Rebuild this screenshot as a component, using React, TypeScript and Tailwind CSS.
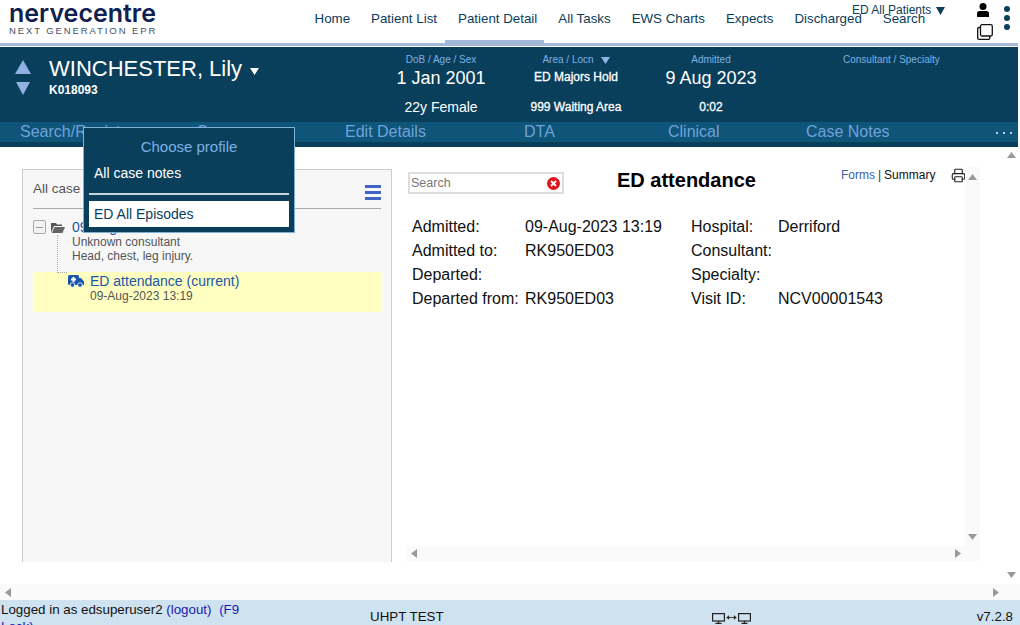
import React from 'react';
import { Printer } from 'lucide-react';

const navItems = ['Home', 'Patient List', 'Patient Detail', 'All Tasks', 'EWS Charts', 'Expects', 'Discharged', 'Search'];

const Tri = ({ dir, className }: { dir: 'up' | 'down' | 'left' | 'right'; className?: string }) => {
  const points = {
    up: '0,10 5,0 10,10',
    down: '0,0 10,0 5,10',
    left: '10,0 10,10 0,5',
    right: '0,0 10,5 0,10',
  }[dir];
  return (
    <svg viewBox="0 0 10 10" preserveAspectRatio="none" className={className}>
      <polygon points={points} fill="currentColor" />
    </svg>
  );
};

const Monitor = () => (
  <svg width="13" height="11" viewBox="0 0 13 11" fill="none" stroke="#222" strokeWidth="1.2">
    <rect x="0.6" y="0.6" width="11.8" height="7.4" />
    <path d="M6.500 8v2M3.500 10.400h6" />
  </svg>
);

const Ambulance = () => (
  <svg width="16" height="13" viewBox="0 0 16 13">
    <path d="M1.5 0h8A1.5 1.5 0 0 1 11 1.5V3h2l3 3.500V10H1.500A1.500 1.500 0 0 1 0 8.500v-7A1.500 1.500 0 0 1 1.500 0z" fill="#1a56a8" />
    <path d="M4.500 2h2v1.500H8v2H6.500V7h-2V5.500H3v-2h1.500z" fill="#fff" />
    <circle cx="4.500" cy="10" r="2.300" fill="#1a56a8" stroke="#fff" strokeWidth="0.8" />
    <circle cx="12" cy="10" r="2.300" fill="#1a56a8" stroke="#fff" strokeWidth="0.8" />
  </svg>
);

const Folder = () => (
  <svg width="14" height="11" viewBox="0 0 14 11">
    <path d="M0 1h5l1 1.500h5V4H3L0 10.500z" fill="#555" />
    <path d="M3.500 5H14l-2.500 6H0.800z" fill="#666" />
  </svg>
);

const UserIcon = () => (
  <svg width="12" height="14" viewBox="0 0 12 14" fill="#000">
    <circle cx="6" cy="3.500" r="3.500" />
    <path d="M2.500 8h7A2.500 2.500 0 0 1 12 10.500V14H0v-3.500A2.500 2.500 0 0 1 2.500 8z" />
  </svg>
);

const CopyIcon = () => (
  <svg width="16" height="16" viewBox="0 0 16 16" fill="none" stroke="#111" strokeWidth="1.300">
    <rect x="3.500" y="0.700" width="11.800" height="11.300" rx="1.500" />
    <path d="M3.500 3.500H2A1.300 1.300 0 0 0 0.700 4.800V14a1.300 1.300 0 0 0 1.300 1.300h9.500A1.300 1.300 0 0 0 12.800 14v-2" />
  </svg>
);

const DoubleArrow = () => (
  <svg width="11" height="7" viewBox="0 0 11 7" fill="#222" stroke="#222" strokeWidth="0.8">
    <path d="M1.500 3.500h8" fill="none" />
    <path d="M0.500 3.500L3 1.500v4zM10.500 3.500L8 1.500v4z" strokeWidth="0.300" />
  </svg>
);

const InfoColumn = ({ label, top, bottom, topClass, bottomClass, width, arrow }: {
  label: string;
  top: string;
  bottom: string;
  topClass: string;
  bottomClass: string;
  width: string;
  arrow?: boolean;
}) => (
  <div className={`flex flex-col items-center ${width}`}>
    <div className="flex h-[12px] items-center gap-[7px] text-[10px] leading-[12px] text-[#7db0e6]">
      {label}
      {arrow && <Tri dir="down" className="h-[7px] w-[9px] text-[#8fb4e8]" />}
    </div>
    <div className={`flex h-[25px] items-center text-white ${topClass}`}>{top}</div>
    <div className={`mt-[6px] flex h-[20px] items-center text-white ${bottomClass}`}>{bottom}</div>
  </div>
);

const Row = ({ label, value, width }: { label: string; value?: string; width: string }) => (
  <div className="flex h-[24px] items-center">
    <span className={width}>{label}</span>
    <span>{value}</span>
  </div>
);

const App: React.FC = () => {
  return (
    <div className="relative flex h-[625px] w-[1020px] flex-col overflow-hidden bg-white font-['Liberation_Sans',Arial,sans-serif] text-[#111]">
      {/* Top nav */}
      <div className="h-[47px] w-[1018px] shrink-0 pb-[1px]">
        <header className="relative flex h-[46px] border-b-[3px] border-b-[#a3b9d9] bg-white">
          <div className="flex w-[300px] flex-col pl-[9px]">
            <span className="mt-[-1px] font-['Inter',sans-serif] text-[25px] font-semibold leading-[29px] text-[#10204f]">nervecentre</span>
            <span className="mt-[-3px] text-[9.500px] leading-[12px] tracking-[1.900px] text-[#44506a]">NEXT GENERATION EPR</span>
          </div>
          <nav className="ml-[4px] flex items-start">
            {navItems.map((item) =>
              item === 'Patient Detail' ? (
                <div key={item} className="ml-[-2.500px] mr-[3.500px] flex h-[46px] items-center whitespace-nowrap border-b-[6px] border-b-[#a3b9d9] pb-[2px] pl-[13px] pr-[7px] text-[13.333px] text-[#0b3c5a]">
                  {item}
                </div>
              ) : (
                <div key={item} className="flex h-[43px] items-center whitespace-nowrap px-[10.500px] pb-[5px] text-[13.333px] text-[#0b3c5a]">
                  {item}
                </div>
              ),
            )}
          </nav>
          <div className="absolute left-[852px] top-[3px] flex items-center gap-[5px] text-[12px] leading-[15px] text-[#0b3c5a]">
            ED All Patients
            <Tri dir="down" className="h-[8px] w-[9px] text-[#0b3c5a]" />
          </div>
          <div className="absolute left-[977px] top-[3px]">
            <UserIcon />
          </div>
          <div className="absolute left-[977px] top-[24px]">
            <CopyIcon />
          </div>
          <div className="absolute left-[1004px] top-[6px] flex flex-col gap-[3px]">
            <div className="h-[6px] w-[6px] rounded-full bg-[#0a3f5c]" />
            <div className="h-[6px] w-[6px] rounded-full bg-[#0a3f5c]" />
            <div className="h-[6px] w-[6px] rounded-full bg-[#0a3f5c]" />
          </div>
        </header>
      </div>

      {/* Patient banner */}
      <section className="flex h-[75px] w-[1018px] shrink-0 bg-[#0a3f5c]">
        <div className="flex w-[49px] flex-col items-center pt-[13px]">
          <Tri dir="up" className="mr-[3px] h-[14px] w-[16px] text-[#8fb0e0]" />
          <Tri dir="down" className="mr-[3px] mt-[8px] h-[13px] w-[14px] text-[#8fb0e0]" />
        </div>
        <div className="w-[327px] pt-[6px]">
          <div className="flex h-[30px] items-center text-[22px] text-white">
            WINCHESTER, Lily
            <Tri dir="down" className="ml-[8px] mt-[6px] h-[7px] w-[9px] text-white" />
          </div>
          <div className="text-[12px] font-bold leading-[15px] text-white">K018093</div>
        </div>
        <div className="flex pt-[7px]">
          <InfoColumn width="w-[130px]" label="DoB / Age / Sex" top="1 Jan 2001" bottom="22y Female" topClass="text-[18px]" bottomClass="text-[14px]" />
          <InfoColumn width="w-[140px]" label="Area / Locn" top="ED Majors Hold" bottom="999 Waiting Area" topClass="pb-[3px] text-[12px] [-webkit-text-stroke:0.3px_white]" bottomClass="text-[12px] [-webkit-text-stroke:0.3px_white]" arrow />
          <InfoColumn width="w-[130px]" label="Admitted" top="9 Aug 2023" bottom="0:02" topClass="text-[18px]" bottomClass="text-[12px] [-webkit-text-stroke:0.3px_white]" />
          <div className="whitespace-nowrap pl-[67px] text-[10px] leading-[12px] text-[#7db0e6]">Consultant / Specialty</div>
        </div>
      </section>

      {/* Tabs */}
      <div className="w-[1018px] shrink-0 bg-[#0a3f5c] pb-[5px]">
        <div className="relative flex h-[20px] items-center bg-[#0f5479] text-[16px] text-[#6fa3d8]">
          <div className="flex w-[177px] pl-[20px]">Search/Register</div>
          <div className="flex w-[168px] pl-[20px]">Summary</div>
          <div className="w-[179px]">Edit Details</div>
          <div className="w-[144px]">DTA</div>
          <div className="w-[138px]">Clinical</div>
          <div>Case Notes</div>
          <div className="absolute right-[6px] top-[10px] flex gap-[5px]">
            <div className="h-[2px] w-[2px] bg-[#b8d0ee]" />
            <div className="h-[2px] w-[2px] bg-[#b8d0ee]" />
            <div className="h-[2px] w-[2px] bg-[#b8d0ee]" />
          </div>
        </div>
      </div>

      {/* Main content */}
      <main className="relative flex h-[453px] shrink-0 flex-col">
        <div className="flex h-[437px]">
          <div className="ml-[22px] mt-[22px] h-[393px] w-[370px] border-x border-t border-[#ccc] bg-[#f7f7f7] px-[10px] pt-[9px]">
            <div className="flex h-[30px] items-start justify-between border-b border-b-[#aaa]">
              <span className="text-[13.500px] leading-[20px] text-[#555]">All case notes</span>
              <div className="mt-[6px] flex flex-col gap-[3px]">
                <div className="h-[3px] w-[16px] bg-[#3f66c4]" />
                <div className="h-[3px] w-[16px] bg-[#3f66c4]" />
                <div className="h-[3px] w-[16px] bg-[#3f66c4]" />
              </div>
            </div>
            <div className="relative flex pt-[10px]">
              <div className="mt-[1px] flex h-[14px] w-[13px] items-center justify-center rounded-[2px] border border-[#aaa] bg-[#f2f2f2]">
                <div className="h-[1px] w-[7px] bg-[#999]" />
              </div>
              <div className="ml-[5px] mt-[3px]">
                <Folder />
              </div>
              <div className="ml-[7px] flex flex-col">
                <span className="text-[14px] leading-[16px] text-[#1a56a8]">09-Aug-2023</span>
                <span className="text-[12px] leading-[14px] text-[#555]">Unknown consultant</span>
                <span className="text-[12px] leading-[14px] text-[#555]">Head, chest, leg injury.</span>
              </div>
              <div className="absolute left-[24px] top-[26px] h-[38px] w-[10px] border-b border-l border-dotted border-[#aaa]" />
            </div>
            <div className="mt-[9px] flex h-[40px] bg-[#ffffc0] pl-[35px]">
              <div className="pt-[3px]">
                <Ambulance />
              </div>
              <div className="ml-[6px] flex flex-col">
                <span className="text-[14px] leading-[18px] text-[#1a56a8]">ED attendance (current)</span>
                <span className="text-[12px] leading-[12px] text-[#555]">09-Aug-2023 13:19</span>
              </div>
            </div>
          </div>

          <div className="ml-[14px] mt-[20px] flex w-[574px] flex-col">
            <div className="flex h-[379px] bg-white">
              <div className="w-[559px]">
                <div className="flex items-start pl-[2px] pt-[5px]">
                  <div className="flex h-[22px] w-[156px] shrink-0 items-center justify-between border-2 border-[#ddd] pl-[1px] pr-[2px] text-[12.500px] text-[#777]">
                    Search
                    <div className="flex h-[13px] w-[13px] items-center justify-center rounded-full bg-[#e0141e]">
                      <svg width="7" height="7" viewBox="0 0 7 7" stroke="#fff" strokeWidth="1.800">
                        <path d="M1 1l5 5M6 1L1 6" />
                      </svg>
                    </div>
                  </div>
                  <div className="ml-[53px] mt-[-4px] whitespace-nowrap text-[20px] font-bold leading-[24px] text-black">ED attendance</div>
                  <div className="ml-[85px] mt-[-5px] flex items-center whitespace-nowrap text-[12px] leading-[16px]">
                    <span className="text-[#3a5fb0]">Forms</span>
                    <span className="mx-[3px] text-[#333]">|</span>
                    <span className="text-[#111]">Summary</span>
                  </div>
                  <Printer size={15} className="ml-[16px] mt-[-4px] shrink-0 text-[#222]" strokeWidth={1.800} />
                </div>
                <div className="mt-[21px] flex pl-[6px] text-[16px] text-[#111]">
                  <div className="w-[279px]">
                    <Row width="w-[113px]" label="Admitted:" value="09-Aug-2023 13:19" />
                    <Row width="w-[113px]" label="Admitted to:" value="RK950ED03" />
                    <Row width="w-[113px]" label="Departed:" />
                    <Row width="w-[113px]" label="Departed from:" value="RK950ED03" />
                  </div>
                  <div>
                    <Row width="w-[87px]" label="Hospital:" value="Derriford" />
                    <Row width="w-[87px]" label="Consultant:" />
                    <Row width="w-[87px]" label="Specialty:" />
                    <Row width="w-[87px]" label="Visit ID:" value="NCV00001543" />
                  </div>
                </div>
              </div>
              <div className="flex w-[15px] flex-col items-center justify-between bg-[#fafafa] pb-[6px] pt-[7px] text-[#999]">
                <Tri dir="up" className="h-[6px] w-[9px]" />
                <Tri dir="down" className="h-[6px] w-[9px]" />
              </div>
            </div>
            <div className="flex h-[15px] items-center justify-between bg-[#fafafa] pl-[5px] pr-[19px] text-[#999]">
              <Tri dir="left" className="h-[9px] w-[6px]" />
              <Tri dir="right" className="h-[9px] w-[6px]" />
            </div>
          </div>

          <div className="flex w-[40px] flex-col items-end justify-between pb-[6px] pt-[5px]">
            <div className="flex h-full w-[17px] flex-col items-center justify-between text-[#999]">
              <Tri dir="up" className="h-[6px] w-[9px]" />
              <Tri dir="down" className="h-[6px] w-[9px]" />
            </div>
          </div>
        </div>
        <div className="flex h-[16px] items-center justify-between bg-[#fafafa] pl-[5px] pr-[21px] text-[#999]">
          <Tri dir="left" className="h-[9px] w-[6px]" />
          <Tri dir="right" className="h-[9px] w-[6px]" />
        </div>
      </main>

      {/* Status bar */}
      <footer className="flex h-[25px] shrink-0 overflow-hidden bg-[#cfe2ef] text-[#111]">
        <div className="w-[245px] pl-[1px] pt-[1px] text-[13.333px] leading-[17px]">
          Logged in as edsuperuser2 <span className="text-[#1a1ab0]">(logout)</span>{' '}
          <span className="ml-[4px] text-[#1a1ab0]">(F9 Lock)</span>
        </div>
        <div className="ml-[125px] w-[342px] pt-[9px] text-[13.333px] leading-[16px]">UHPT TEST</div>
        <div className="flex items-start gap-[1px] pt-[13px]">
          <Monitor />
          <div className="pt-[1px]">
            <DoubleArrow />
          </div>
          <Monitor />
        </div>
        <div className="ml-auto pr-[7px] pt-[9px] text-[13.333px] leading-[16px]">v7.2.8</div>
      </footer>

      {/* Choose profile popup */}
      <div className="absolute left-[83px] top-[127px] flex h-[106px] w-[212px] flex-col border border-[#7fb0d8] bg-[#0a3f5c] px-[5px]">
        <div className="pt-[10px] text-center text-[15px] leading-[17px] text-[#7db0e6]">Choose profile</div>
        <div className="mt-[10px] h-[28px] pl-[5px] text-[14px] leading-[17px] text-white">All case notes</div>
        <div className="h-[2px] bg-[#c8d4dc]" />
        <div className="mt-[6px] flex h-[26px] items-center bg-white pl-[5px] text-[14px] text-[#0a3f5c]">ED All Episodes</div>
      </div>
    </div>
  );
};

export default App;
